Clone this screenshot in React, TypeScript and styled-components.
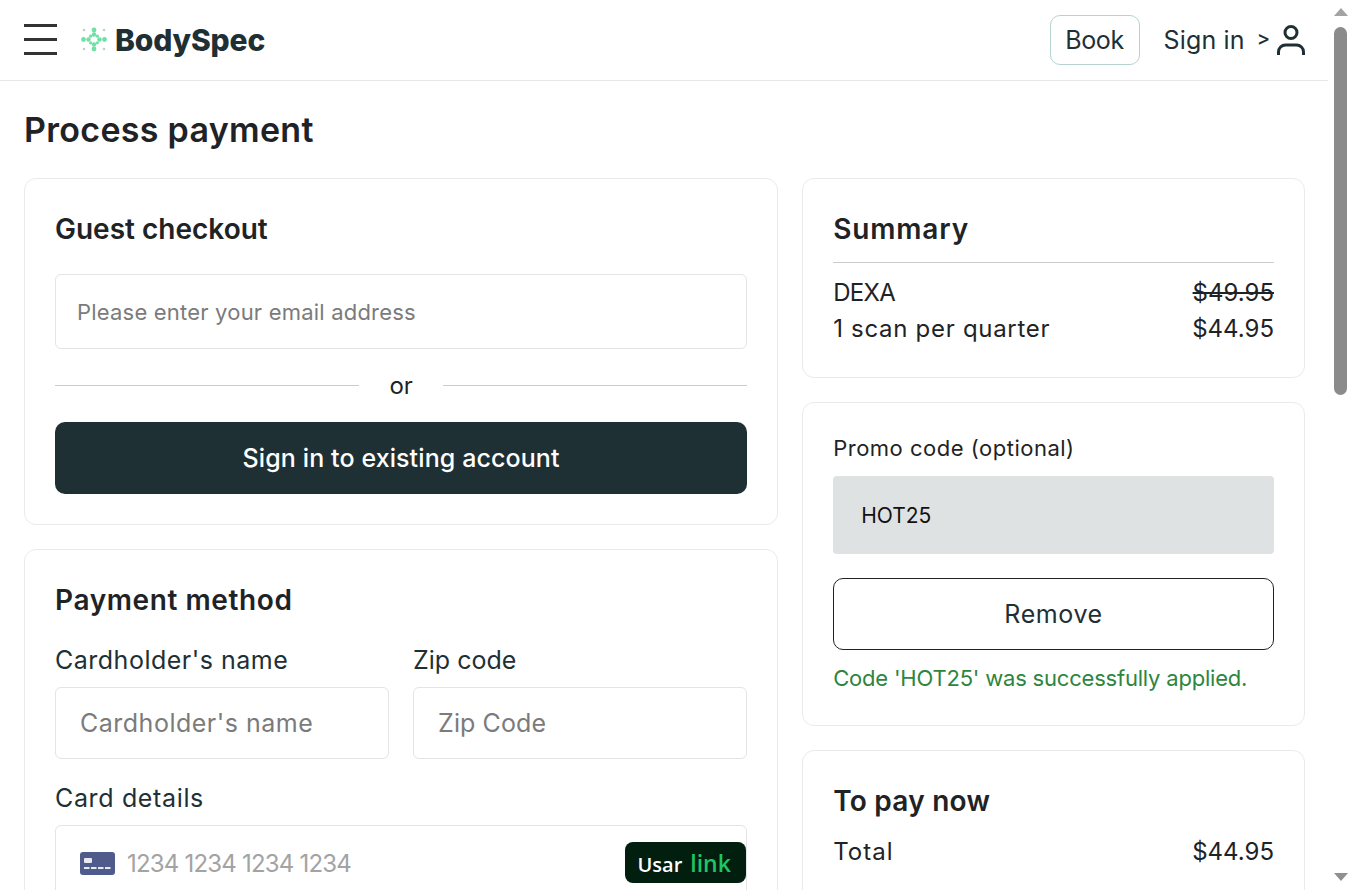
import React from "react"
import styled, { createGlobalStyle } from "styled-components"

const Global = createGlobalStyle`
  html, body { margin: 0; padding: 0; background: #fff; height: 100%; overflow: hidden; }
  body { font-family: Inter, "Noto Sans", sans-serif; color: #1f2325; }
  * { box-sizing: border-box; }
`

const Shell = styled.div`
  display: flex;
  height: 890px;
  overflow: hidden;
`

const Content = styled.div`
  flex: 1;
  min-width: 0;
  overflow: hidden;
`

const Rail = styled.div`
  width: 24px;
  flex: none;
  display: flex;
  flex-direction: column;
  align-items: flex-start;
  padding: 8px 0 9px 6px;
  background: #fff;
`

const ArrowUp = styled.div`
  width: 0;
  height: 0;
  border-left: 7px solid transparent;
  border-right: 7px solid transparent;
  border-bottom: 8px solid #a3a3a3;
`

const ArrowDown = styled.div`
  width: 0;
  height: 0;
  margin-top: auto;
  border-left: 7px solid transparent;
  border-right: 7px solid transparent;
  border-top: 8px solid #8f8f8f;
`

const Thumb = styled.div`
  width: 13px;
  height: 368px;
  margin-top: 11px;
  background: #8b8b8b;
  border-radius: 7px;
`

const Header = styled.header`
  height: 81px;
  display: flex;
  align-items: center;
  justify-content: space-between;
  padding: 0 22px 1px 24px;
  border-bottom: 1px solid #e6e8e8;
`

const Left = styled.div`
  display: flex;
  align-items: center;
`

const Burger = styled.div`
  width: 33px;
  height: 31px;
  display: flex;
  flex-direction: column;
  justify-content: space-between;
  margin-right: 24px;
`

const BurgerLine = styled.span`
  display: block;
  height: 3px;
  background: #333;
`

const Wordmark = styled.span`
  margin-left: 8px;
  font-size: 30px;
  font-weight: 800;
  letter-spacing: -0.15px;
  color: #1f3035;
`

const Right = styled.div`
  display: flex;
  align-items: center;
`

const BookButton = styled.button`
  width: 90px;
  height: 50px;
  background: #fff;
  border: 1px solid #b5d3cf;
  border-radius: 10px;
  font-family: inherit;
  font-size: 25px;
  letter-spacing: -0.4px;
  color: #1f3035;
  margin-right: 24px;
  padding: 0;
`

const SignIn = styled.span`
  font-size: 25px;
  color: #1f3035;
  letter-spacing: 0.15px;
`

const Chevron = styled.span`
  font-size: 20px;
  font-weight: 500;
  color: #1f3035;
  margin: -4px 6px 0 12px;
`

const Main = styled.main`
  padding: 26px 23px 0 24px;
`

const PageTitle = styled.h1`
  margin: 0 0 25px;
  font-size: 34px;
  line-height: 46px;
  font-weight: 600;
  letter-spacing: 0.3px;
  color: #1f2325;
`

const Columns = styled.div`
  display: grid;
  grid-template-columns: 3fr 2fr;
  gap: 24px;
  align-items: start;
`

const Stack = styled.div`
  display: flex;
  flex-direction: column;
  gap: 24px;
`

const Card = styled.section`
  border: 1px solid #e9ebeb;
  border-radius: 12px;
  padding: 31px 30px 30px;
`

const CardTitle = styled.h2<{ $gap?: number; $track?: number }>`
  margin: 0 0 ${(p) => p.$gap ?? 0}px;
  font-size: 28px;
  line-height: 38px;
  font-weight: 600;
  letter-spacing: ${(p) => p.$track ?? 0}px;
  color: #1f2325;
`

const TextInput = styled.input<{ $height: number; $size: number; $pad: number; $track: number }>`
  display: block;
  width: 100%;
  height: ${(p) => p.$height}px;
  padding: 0 ${(p) => p.$pad}px;
  border: 1px solid #e2e4e5;
  border-radius: 6px;
  background: #fff;
  font-family: inherit;
  font-size: ${(p) => p.$size}px;
  letter-spacing: ${(p) => p.$track}px;
  outline: none;

  &::placeholder {
    color: #7b7b7b;
    opacity: 1;
  }
`

const OrRow = styled.div`
  display: flex;
  align-items: center;
  height: 73px;
`

const OrLine = styled.span`
  flex: 1;
  height: 1px;
  background: #c9cdce;
`

const OrText = styled.span`
  width: 84px;
  text-align: center;
  font-size: 24px;
  color: #1f2325;
`

const PrimaryButton = styled.button`
  display: block;
  width: 100%;
  height: 72px;
  border: none;
  border-radius: 10px;
  background: #1f3035;
  color: #fff;
  font-family: inherit;
  font-size: 25px;
  letter-spacing: 0.1px;
  font-weight: 500;
`

const FieldRow = styled.div`
  display: grid;
  grid-template-columns: 1fr 1fr;
  gap: 24px;
`

const FieldLabel = styled.label<{ $top?: number; $track: number }>`
  display: block;
  margin-top: ${(p) => p.$top ?? 0}px;
  margin-bottom: 11px;
  font-size: 25px;
  letter-spacing: ${(p) => p.$track}px;
  line-height: 32px;
  color: #1f3035;
`

const CardBox = styled.div`
  height: 76px;
  display: flex;
  align-items: center;
  padding: 0 0 0 24px;
  border: 1px solid #e2e4e5;
  border-radius: 6px;
  position: relative;
`

const CardNumber = styled.span`
  margin-left: 12px;
  font-size: 24px;
  letter-spacing: -0.8px;
  color: #a3a3a3;
`

const LinkPill = styled.button`
  position: absolute;
  right: 0;
  top: 16px;
  width: 121px;
  height: 41px;
  border: none;
  border-radius: 8px;
  background: #011e0f;
  color: #fff;
  font-family: "Open Sans", sans-serif;
  font-size: 20px;
  font-weight: 600;
  padding: 0 3px 0 0;
`

const LinkWord = styled.span`
  margin-left: 8px;
  font-size: 23px;
  color: #1ec663;
`

const Divider = styled.hr`
  margin: 0 0 12px;
  border: none;
  border-top: 1px solid #c9cdce;
`

const PriceRow = styled.div<{ $top?: number }>`
  display: flex;
  justify-content: space-between;
  margin-top: ${(p) => p.$top ?? 0}px;
  font-size: 24px;
  line-height: 36px;
  color: #1f2325;
`

const PriceLabel = styled.span<{ $track: number }>`
  letter-spacing: ${(p) => p.$track}px;
`

const OldPrice = styled.s`
  color: #1f2325;
`

const PromoLabel = styled.label`
  display: block;
  margin-top: -2px;
  margin-bottom: 12px;
  font-size: 22px;
  letter-spacing: 0.5px;
  line-height: 32px;
  color: #1f2325;
`

const PromoValue = styled.div`
  height: 78px;
  display: flex;
  align-items: center;
  padding-left: 28px;
  border-radius: 4px;
  background: #dfe2e2;
  font-size: 21px;
  color: #111;
`

const OutlineButton = styled.button`
  display: block;
  width: 100%;
  height: 72px;
  margin-top: 24px;
  border: 1px solid #1f2325;
  border-radius: 10px;
  background: #fff;
  font-family: inherit;
  font-size: 25px;
  letter-spacing: 0.6px;
  color: #1f3035;
`

const SuccessText = styled.p`
  margin: 12px 0 1px;
  font-size: 22px;
  letter-spacing: -0.2px;
  line-height: 32px;
  color: #2e8540;
`

function LogoMark() {
  const green = "#6fe0a6"
  const grey = "#c3ccca"
  return (
    <svg width="26" height="26" viewBox="0 0 26 26">
      <circle cx="3" cy="3" r="1.3" fill={grey} />
      <circle cx="23" cy="3" r="1.3" fill={grey} />
      <circle cx="3" cy="22" r="1.3" fill={grey} />
      <circle cx="23" cy="22" r="1.3" fill={grey} />
      <circle cx="13" cy="3" r="2.4" fill={green} />
      <circle cx="13" cy="22" r="2.4" fill={green} />
      <circle cx="2.5" cy="12.5" r="2.4" fill={green} />
      <circle cx="23.5" cy="12.5" r="2.4" fill={green} />
      <circle cx="7.5" cy="12.5" r="2.2" fill={green} />
      <circle cx="18.5" cy="12.5" r="2.2" fill={green} />
      <circle cx="13" cy="7.5" r="2.2" fill={green} />
      <circle cx="13" cy="17.5" r="2.2" fill={green} />
      <circle cx="9.6" cy="9.2" r="1.6" fill={green} />
      <circle cx="16.4" cy="9.2" r="1.6" fill={green} />
      <circle cx="9.6" cy="15.8" r="1.6" fill={green} />
      <circle cx="16.4" cy="15.8" r="1.6" fill={green} />
    </svg>
  )
}

function UserIcon() {
  return (
    <svg width="30" height="32" viewBox="0 0 30 32" fill="none" stroke="#1f3035" strokeWidth="3">
      <circle cx="15" cy="8.5" r="6" />
      <path d="M2.5 31v-3a7 7 0 0 1 7-7h11a7 7 0 0 1 7 7v3" />
    </svg>
  )
}

function CreditCardIcon() {
  return (
    <svg width="35" height="23" viewBox="0 0 35 23">
      <rect width="35" height="23" rx="3" fill="#4f5b8a" />
      <rect x="4" y="6" width="8" height="5" rx="1" fill="#e8eaf2" />
      <rect x="4" y="15" width="5.5" height="2" fill="#e8eaf2" />
      <rect x="11" y="15" width="5.5" height="2" fill="#e8eaf2" />
      <rect x="18" y="15" width="5.5" height="2" fill="#e8eaf2" />
      <rect x="25" y="15" width="5.5" height="2" fill="#e8eaf2" />
    </svg>
  )
}

export default function App() {
  return (
    <Shell>
      <Global />
      <Content>
        <Header>
          <Left>
            <Burger>
              <BurgerLine />
              <BurgerLine />
              <BurgerLine />
            </Burger>
            <LogoMark />
            <Wordmark>BodySpec</Wordmark>
          </Left>
          <Right>
            <BookButton>Book</BookButton>
            <SignIn>Sign in</SignIn>
            <Chevron>&gt;</Chevron>
            <UserIcon />
          </Right>
        </Header>
        <Main>
          <PageTitle>Process payment</PageTitle>
          <Columns>
            <Stack>
              <Card>
                <CardTitle $gap={26}>Guest checkout</CardTitle>
                <TextInput $height={75} $size={22} $pad={21} $track={0.2} placeholder="Please enter your email address" />
                <OrRow>
                  <OrLine />
                  <OrText>or</OrText>
                  <OrLine />
                </OrRow>
                <PrimaryButton>Sign in to existing account</PrimaryButton>
              </Card>
              <Card>
                <CardTitle $gap={25} $track={0.6}>Payment method</CardTitle>
                <FieldRow>
                  <div>
                    <FieldLabel $track={0.5}>Cardholder's name</FieldLabel>
                    <TextInput $height={72} $size={25} $pad={24} $track={0.5} placeholder="Cardholder's name" />
                  </div>
                  <div>
                    <FieldLabel $track={0}>Zip code</FieldLabel>
                    <TextInput $height={72} $size={25} $pad={24} $track={0.1} placeholder="Zip Code" />
                  </div>
                </FieldRow>
                <FieldLabel $top={23} $track={0.65}>Card details</FieldLabel>
                <CardBox>
                  <CreditCardIcon />
                  <CardNumber>1234 1234 1234 1234</CardNumber>
                  <LinkPill>
                    Usar<LinkWord>link</LinkWord>
                  </LinkPill>
                </CardBox>
              </Card>
            </Stack>
            <Stack>
              <Card>
                <CardTitle $gap={14} $track={0.85}>Summary</CardTitle>
                <Divider />
                <PriceRow>
                  <PriceLabel $track={-0.7}>DEXA</PriceLabel>
                  <OldPrice>$49.95</OldPrice>
                </PriceRow>
                <PriceRow>
                  <PriceLabel $track={0.7}>1 scan per quarter</PriceLabel>
                  <span>$44.95</span>
                </PriceRow>
              </Card>
              <Card>
                <PromoLabel>Promo code (optional)</PromoLabel>
                <PromoValue>HOT25</PromoValue>
                <OutlineButton>Remove</OutlineButton>
                <SuccessText>Code 'HOT25' was successfully applied.</SuccessText>
              </Card>
              <Card>
                <CardTitle $track={0.25}>To pay now</CardTitle>
                <PriceRow $top={14}>
                  <PriceLabel $track={1}>Total</PriceLabel>
                  <span>$44.95</span>
                </PriceRow>
              </Card>
            </Stack>
          </Columns>
        </Main>
      </Content>
      <Rail>
        <ArrowUp />
        <Thumb />
        <ArrowDown />
      </Rail>
    </Shell>
  )
}
